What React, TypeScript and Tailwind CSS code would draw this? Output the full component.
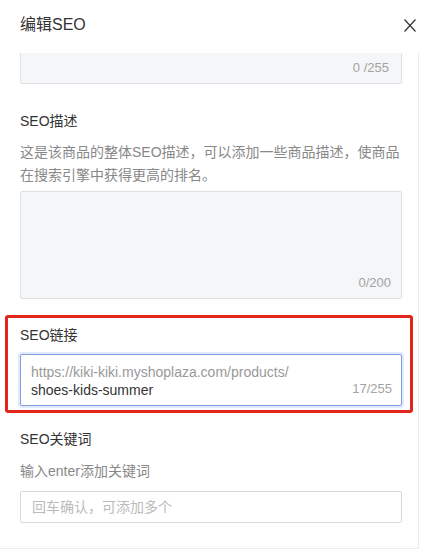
import React from "react"

function CloseIcon() {
  return (
    <svg width="12" height="13" viewBox="0 0 12 13" fill="none" stroke="#333" strokeWidth="1.2">
      <path d="M0.5 0.5 L11.5 12.5 M11.5 0.5 L0.5 12.5" />
    </svg>
  )
}

export default function App() {
  return (
    <div className="w-[423px] h-[550px] bg-white overflow-hidden font-['Liberation_Sans','Noto_Sans_CJK_SC',sans-serif] text-[#333]">
      <div className="h-[53px] flex items-start justify-between pl-5 pr-[7px] pt-[14px]">
        <span className="text-[16px] leading-[22px] text-[#333]">编辑SEO</span>
        <span className="mt-[5px]">
          <CloseIcon />
        </span>
      </div>

      <div className="w-[419px] h-[496px] border-r border-b border-[#ececec] pl-5 pr-4 overflow-hidden">
        {/* SEO title input, scrolled off */}
        <div className="h-[31px] bg-[#f5f6f7] border-x border-b border-[#dcdfe3] rounded-b-[2px] flex items-center justify-end pr-3">
          <span className="text-[13px] text-[#a3a3a3]">0 /255</span>
        </div>

        <div className="mt-[27px] text-[14px] leading-[20px] text-[#333]">SEO描述</div>
        <p className="mt-[10px] text-[14px] leading-[23px] text-[#888]">
          这是该商品的整体SEO描述，可以添加一些商品描述，使商品在搜索引擎中获得更高的排名。
        </p>
        <div className="mt-[4px] h-[108px] bg-[#f5f6f7] border border-[#dcdfe3] rounded-[2px] flex items-end justify-end pr-[10px] pb-[6px]">
          <span className="text-[13px] text-[#a3a3a3]">0/200</span>
        </div>

        <div className="mt-[16px] -ml-[15px] -mr-[11px] border-[3px] border-[#e3261c] rounded-[3px] pl-[12px] pr-[8px] pt-[7px] pb-[4px]">
          <div className="text-[14px] leading-[20px] text-[#333]">SEO链接</div>
          <div className="mt-[9px] h-[52px] border border-[#7f9ee6] rounded-[2px] shadow-[0_0_0_2px_#e1e9fb] relative pl-[10px] pt-[8px]">
            <div className="text-[14px] leading-[18px] text-[#999]">https://kiki-kiki.myshoplaza.com/products/</div>
            <div className="text-[14px] leading-[18px] text-[#333]">shoes-kids-summer</div>
            <span className="absolute right-[9px] bottom-[7px] text-[13px] leading-[18px] text-[#a3a3a3]">17/255</span>
          </div>
        </div>

        <div className="mt-[16px] text-[14px] leading-[20px] text-[#333]">SEO关键词</div>
        <div className="mt-[12px] text-[14px] leading-[20px] text-[#888]">输入enter添加关键词</div>
        <div className="mt-[10px] h-[32px] border border-[#d9d9d9] rounded-[2px] flex items-center pl-[11px]">
          <span className="text-[14px] text-[#bbb]">回车确认，可添加多个</span>
        </div>
      </div>
    </div>
  )
}
